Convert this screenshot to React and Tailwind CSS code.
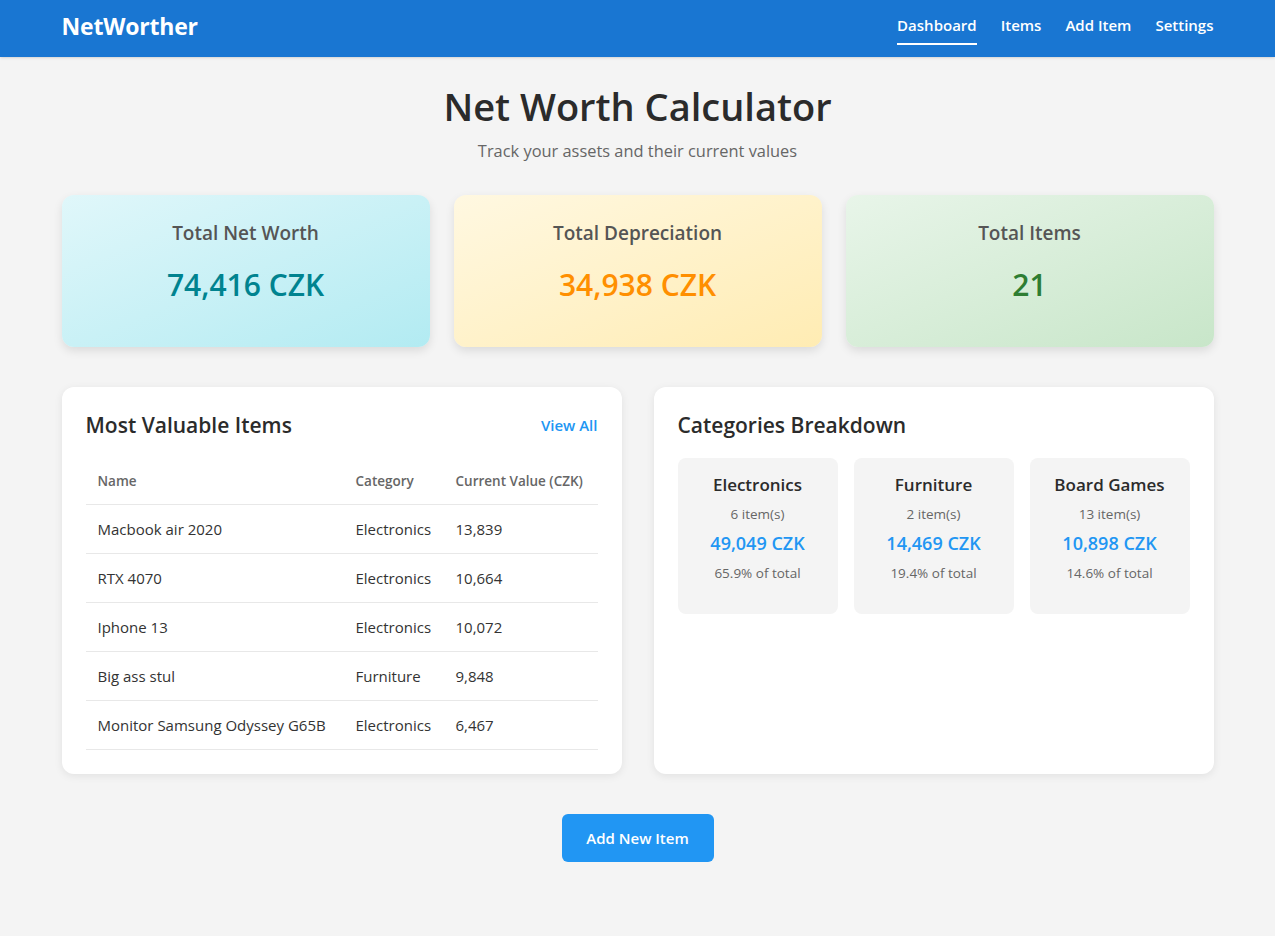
import React from "react";

const items = [
  { name: "Macbook air 2020", cat: "Electronics", val: "13,839" },
  { name: "RTX 4070", cat: "Electronics", val: "10,664" },
  { name: "Iphone 13", cat: "Electronics", val: "10,072" },
  { name: "Big ass stul", cat: "Furniture", val: "9,848" },
  { name: "Monitor Samsung Odyssey G65B", cat: "Electronics", val: "6,467" },
];

const cats = [
  { name: "Electronics", count: "6 item(s)", val: "49,049 CZK", pct: "65.9% of total" },
  { name: "Furniture", count: "2 item(s)", val: "14,469 CZK", pct: "19.4% of total" },
  { name: "Board Games", count: "13 item(s)", val: "10,898 CZK", pct: "14.6% of total" },
];

export default function App() {
  return (
    <div
      className="min-h-[936px] bg-[#f4f4f4] text-[#333]"
      style={{ fontFamily: '"Open Sans", "Noto Sans", sans-serif' }}
    >
      <header className="bg-[#1976d2] h-[57px] shadow-sm">
        <div className="mx-auto max-w-[1200px] px-6 h-full flex items-center justify-between pb-[4px]">
          <div className="text-white text-[23px] font-bold tracking-[-0.2px]">NetWorther</div>
          <nav className="flex items-center gap-6 text-white text-[15px] font-semibold mt-[-2px]">
            <a className="relative py-1">
              Dashboard
              <span className="absolute left-0 right-0 -bottom-[4px] h-[2px] bg-white" />
            </a>
            <a className="py-1">Items</a>
            <a className="py-1">Add Item</a>
            <a className="py-1">Settings</a>
          </nav>
        </div>
      </header>

      <main className="mx-auto max-w-[1200px] px-6">
        <div className="pt-[24px] text-center">
          <h1 className="text-[38px] font-semibold leading-[50px] text-[#2b2b2b]">Net Worth Calculator</h1>
          <p className="mt-[8px] text-[16.4px] text-[#666]">Track your assets and their current values</p>
        </div>

        <div className="mt-[31px] grid grid-cols-3 gap-6">
          <div className="h-[152px] rounded-xl bg-gradient-to-br from-[#e0f7fa] to-[#b2ebf2] shadow-[0_4px_10px_rgba(0,0,0,0.1)] flex flex-col items-center pt-[24px]">
            <div className="text-[19px] font-semibold text-[#555]">Total Net Worth</div>
            <div className="mt-[15px] text-[30px] font-semibold text-[#00838f]">74,416 CZK</div>
          </div>
          <div className="h-[152px] rounded-xl bg-gradient-to-br from-[#fff8e1] to-[#ffecb3] shadow-[0_4px_10px_rgba(0,0,0,0.1)] flex flex-col items-center pt-[24px]">
            <div className="text-[19px] font-semibold text-[#555]">Total Depreciation</div>
            <div className="mt-[15px] text-[30px] font-semibold text-[#ff8f00]">34,938 CZK</div>
          </div>
          <div className="h-[152px] rounded-xl bg-gradient-to-br from-[#e8f5e9] to-[#c8e6c9] shadow-[0_4px_10px_rgba(0,0,0,0.1)] flex flex-col items-center pt-[24px]">
            <div className="text-[19px] font-semibold text-[#555]">Total Items</div>
            <div className="mt-[15px] text-[30px] font-semibold text-[#2e7d32]">21</div>
          </div>
        </div>

        <div className="mt-[40px] grid grid-cols-2 gap-8">
          <section className="bg-white rounded-xl shadow-[0_2px_8px_rgba(0,0,0,0.08)] px-6 pt-[25px] pb-6">
            <div className="flex items-center justify-between h-[28px]">
              <h2 className="text-[21px] font-semibold text-[#2b2b2b]">Most Valuable Items</h2>
              <a className="text-[15px] font-semibold text-[#2196f3]">View All</a>
            </div>
            <table className="mt-[18px] w-full text-left">
              <thead>
                <tr className="border-b border-[#e8e8e8] h-[47px]">
                  <th className="px-3 text-[13.5px] font-semibold text-[#666] w-[258px]">Name</th>
                  <th className="px-3 text-[13.5px] font-semibold text-[#666] w-[100px]">Category</th>
                  <th className="px-3 text-[13.5px] font-semibold text-[#666]">Current Value (CZK)</th>
                </tr>
              </thead>
              <tbody>
                {items.map((it) => (
                  <tr key={it.name} className="border-b border-[#e8e8e8] h-[49px]">
                    <td className="px-3 text-[15px] text-[#333]">{it.name}</td>
                    <td className="px-3 text-[15px] text-[#333]">{it.cat}</td>
                    <td className="px-3 text-[15px] text-[#333]">{it.val}</td>
                  </tr>
                ))}
              </tbody>
            </table>
          </section>

          <section className="bg-white rounded-xl shadow-[0_2px_8px_rgba(0,0,0,0.08)] px-6 pt-[25px] pb-6">
            <div className="flex items-center h-[28px]">
              <h2 className="text-[21px] font-semibold text-[#2b2b2b]">Categories Breakdown</h2>
            </div>
            <div className="mt-[18px] grid grid-cols-3 gap-4">
              {cats.map((c) => (
                <div key={c.name} className="h-[156px] rounded-lg bg-[#f4f4f4] flex flex-col items-center pt-[15px]">
                  <div className="text-[17px] font-semibold text-[#2b2b2b] leading-[24px]">{c.name}</div>
                  <div className="mt-[8px] text-[13.5px] text-[#666] leading-[18px]">{c.count}</div>
                  <div className="mt-[8px] text-[18px] font-semibold text-[#2196f3] leading-[24px]">{c.val}</div>
                  <div className="mt-[9px] text-[13.5px] text-[#666] leading-[18px]">{c.pct}</div>
                </div>
              ))}
            </div>
          </section>
        </div>

        <div className="mt-[40px] flex justify-center pb-10">
          <button className="h-[48px] w-[152px] rounded-md bg-[#2196f3] text-white text-[15px] font-semibold">
            Add New Item
          </button>
        </div>
      </main>
    </div>
  );
}
